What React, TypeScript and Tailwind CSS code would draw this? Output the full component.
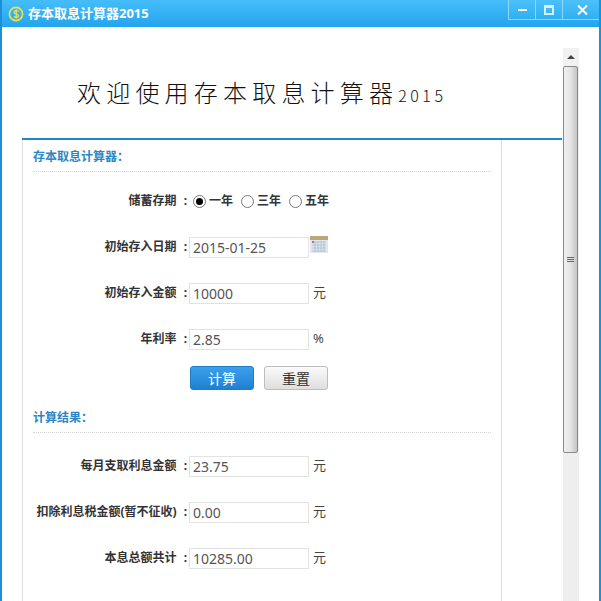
import React from 'react';

const CJK = 'font-["Noto_Sans","Noto_Sans_CJK_SC",sans-serif]';

const Heading = ({ title }: { title: string }) => (
  <div className="pl-[10px] pr-[10px]">
    <div className="h-[32px] border-b border-dotted border-[#d4d4d4] text-[12px] font-bold leading-[34px] text-[#2b86c5]">{title}</div>
  </div>
);

const Row = ({ label, value, unit, children }: { label: string; value?: string; unit?: string; children?: React.ReactNode }) => (
  <div className="flex h-[46px] items-center">
    <div className="w-[166px] shrink-0 whitespace-nowrap text-right text-[12px] font-bold text-[#333]">{label}<span className="ml-[7px] mr-[2px]">:</span></div>
    {children ?? (
      <>
        <div className="h-[21px] w-[120px] border border-[#e2e2e2] pl-[3px] text-[14px] leading-[20px] text-[#555]">{value}</div>
        {unit && <span className="ml-[4px] text-[13px] text-[#444]">{unit}</span>}
      </>
    )}
  </div>
);

const Radio = ({ label, checked }: { label: string; checked?: boolean }) => (
  <div className="flex items-center gap-[3px]">
    <span className="flex h-[13px] w-[13px] items-center justify-center rounded-full border border-[#777] bg-white">
      {checked && <span className="h-[7px] w-[7px] rounded-full bg-black" />}
    </span>
    <span className="text-[12px] font-bold text-[#333]">{label}</span>
  </div>
);

const CalendarIcon = () => (
  <svg width="18" height="17" viewBox="0 0 18 17">
    <rect x="0" y="0" width="18" height="4" fill="#b8a878" />
    <rect x="0" y="4" width="18" height="13" fill="#dfe8f0" />
    <path d="M2 6h14M2 9h14M2 12h14M2 15h14M5 5v11M8 5v11M11 5v11M14 5v11" stroke="#b4c4d4" strokeWidth="1" />
    <rect x="2" y="5" width="2" height="2" fill="#d06a6a" />
  </svg>
);

const AppIcon = () => (
  <svg width="16" height="16" viewBox="0 0 16 16">
    <circle cx="8" cy="8" r="6.6" fill="none" stroke="#f3e04a" strokeWidth="1.6" />
    <path d="M10.6 5.4C9.6 4.2 6 4.2 6 6.2c0 2.2 4.6 1.400 4.600 3.700 0 1.900-3.600 1.900-4.900 .6M8.200 3.200v9.600" fill="none" stroke="#f3e04a" strokeWidth="1.300" />
  </svg>
);

const WinButton = ({ children, wide }: { children: React.ReactNode; wide?: boolean }) => (
  <div className={`flex h-[19px] items-center justify-center border-l border-[#8fd6fb] ${wide ? 'w-[39px]' : 'w-[27px]'}`}>{children}</div>
);

const App: React.FC = () => {
  return (
    <div className={`flex h-[601px] w-[601px] flex-col overflow-hidden border-x-2 border-[#1b8fd8] bg-white ${CJK}`}>
      {/* 标题栏 */}
      <div className="-mx-[2px] flex h-[27px] shrink-0 items-start justify-between bg-gradient-to-b from-[#45bdfa] to-[#22a4ee]">
        <div className="flex h-[27px] items-center gap-[4px] pl-[8px]">
          <AppIcon />
          <span className="text-[13px] font-bold text-white">存本取息计算器2015</span>
        </div>
        <div className="flex border-b border-[#8fd6fb] bg-gradient-to-b from-[#4cc0fa] to-[#2fb0f2]">
          <WinButton><span className="h-[2px] w-[9px] bg-white" /></WinButton>
          <WinButton><span className="h-[10px] w-[10px] border-2 border-t-[3px] border-[#d5f0ff]" /></WinButton>
          <WinButton wide>
            <svg width="11" height="10" viewBox="0 0 11 10"><path d="M1 0.500l9 9M10 0.500l-9 9" stroke="#fff" strokeWidth="2" /></svg>
          </WinButton>
        </div>
      </div>

      <div className="flex min-h-0 flex-1 pl-[20px] pt-[21px]">
        <div className="w-[540px] shrink-0">
          {/* 横幅 */}
          <div className="flex h-[92px] items-center border-b-2 border-[#1f85cc] pb-[2px] pl-[55px]">
            <span className="font-['Noto_Sans_CJK_SC',sans-serif] text-[24px] font-light leading-none tracking-[5.200px] whitespace-nowrap text-[#111]">
              欢迎使用存本取息计算器<span className="text-[16px] tracking-[3.500px]">2015</span>
            </span>
          </div>

          {/* 表单 */}
          <div className="h-[470px] w-[480px] border-x border-[#dddddd]">
            <Heading title="存本取息计算器：" />
            <div className="h-[6px]" />
            <Row label="储蓄存期">
              <div className="ml-[4px] flex gap-[8px]">
                <Radio label="一年" checked />
                <Radio label="三年" />
                <Radio label="五年" />
              </div>
            </Row>
            <Row label="初始存入日期">
              <>
                <div className="h-[21px] w-[120px] border border-[#e2e2e2] pl-[3px] text-[14px] leading-[20px] text-[#555]">2015-01-25</div>
                <div className="mb-[5px] ml-[1px]"><CalendarIcon /></div>
              </>
            </Row>
            <Row label="初始存入金额" value="10000" unit="元" />
            <Row label="年利率" value="2.85" unit="%" />
            <div className="flex h-[39px] gap-[10px] pl-[167px] pt-[4px]">
              <button className="h-[24px] w-[64px] rounded-[3px] border border-[#1f7fc4] bg-gradient-to-b from-[#3ba0ee] to-[#1f80d2] text-[14px] text-white">计算</button>
              <button className="h-[24px] w-[64px] rounded-[3px] border border-[#bdbdbd] bg-gradient-to-b from-[#fafafa] to-[#dedede] text-[14px] text-[#333]">重置</button>
            </div>
            <Heading title="计算结果：" />
            <div className="h-[10px]" />
            <Row label="每月支取利息金额" value="23.75" unit="元" />
            <Row label="扣除利息税金额(暂不征收)" value="0.00" unit="元" />
            <Row label="本息总额共计" value="10285.00" unit="元" />
          </div>
        </div>

        {/* 滚动条 */}
        <div className="ml-[1px] flex w-[16px] shrink-0 flex-col bg-[#eeeeee]">
          <div className="flex h-[18px] items-center justify-center bg-[#f1f1f1]">
            <span className="h-0 w-0 border-x-[4px] border-b-[4px] border-x-transparent border-b-[#444]" />
          </div>
          <div className="flex h-[387px] w-[15px] flex-col items-center justify-center gap-[1px] rounded-[2px] border border-[#8a8a8a] bg-gradient-to-r from-[#f0f0f0] via-[#e4e4e4] to-[#c4c4c4]">
            <span className="h-[1px] w-[7px] bg-[#666]" />
            <span className="h-[1px] w-[7px] bg-[#666]" />
            <span className="h-[1px] w-[7px] bg-[#666]" />
          </div>
        </div>
      </div>
    </div>
  );
};

export default App;
